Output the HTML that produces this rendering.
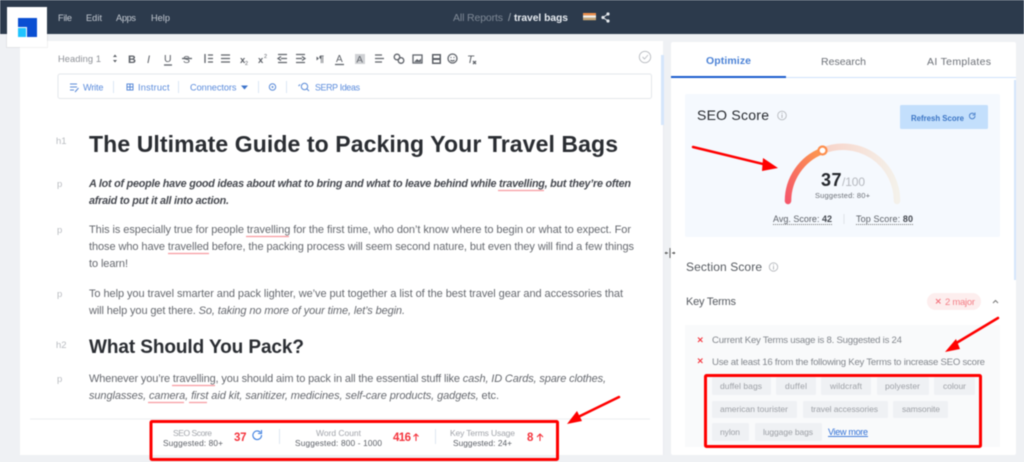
<!DOCTYPE html>
<html><head><meta charset="utf-8"><title>travel bags</title>
<style>
html,body{margin:0;padding:0;width:1024px;height:462px;overflow:hidden;background:#eff1f4}
svg{display:block;filter:blur(.4px)}
text{font-family:"Liberation Sans",sans-serif;white-space:pre}
.p{font-size:11px;fill:#66696f}
.bi{font-size:10.8px;fill:#45484f;font-weight:bold;font-style:italic}
.l{font-size:9.5px;fill:#b9bcc1}
.m{font-size:9.2px;fill:#c3c9d1}
.b{font-size:9.2px;fill:#5a8bdc}
.t{font-size:8.5px}
.k{font-size:9.6px;fill:#83878d}
.s{font-size:8.3px;fill:#5b5f66}
.g{font-size:8.5px;fill:#9da0a6}
.r{font-weight:bold;fill:#f4333c;font-size:11.5px}
.ic{fill:none;stroke:#60646b;stroke-width:1.3}
.ib{fill:none;stroke:#5b8bd8;stroke-width:1}
</style></head><body>
<svg width="1024" height="462" viewBox="0 0 1024 462" xmlns="http://www.w3.org/2000/svg">
<defs>
<linearGradient id="gr" x1="0" y1="1" x2="1" y2="0"><stop offset="0" stop-color="#f5586a"/><stop offset="1" stop-color="#fd9a4e"/></linearGradient>
<linearGradient id="gl" x1="0" y1="0" x2="1" y2="0"><stop offset="0" stop-color="#f8d3c8"/><stop offset="1" stop-color="#f4f1ea"/></linearGradient>
</defs>
<rect width="1024" height="462" fill="#eff1f4"/>
<!-- top bar -->
<rect width="1024" height="34" fill="#2c3a4c"/>
<!-- editor panel -->
<rect x="20" y="41" width="643" height="414" fill="#fff"/>
<rect x="661" y="55" width="3" height="70" fill="#d5e6fb"/>
<rect x="663" y="125" width="1" height="330" fill="#e9ebef"/>
<!-- logo -->
<rect x="6" y="8" width="42" height="40" fill="#000" opacity=".05"/>
<rect x="7" y="7" width="40" height="40" fill="#fff"/>
<path d="M18 18H37V37H27V27H18Z" fill="#0a4fd2"/>
<rect x="18" y="28" width="8" height="9" fill="#1fc4ff"/>
<!-- menu -->
<text class="m" x="58" y="21" textLength="14">File</text>
<text class="m" x="86" y="21" textLength="16">Edit</text>
<text class="m" x="116" y="21" textLength="20">Apps</text>
<text class="m" x="151" y="21" textLength="19">Help</text>
<text x="453" y="21" font-size="10.500" fill="#7f8996" textLength="50">All Reports</text>
<text x="508" y="21" font-size="11" fill="#9aa3ad">/</text>
<text x="514" y="21" font-size="10.300" font-weight="bold" fill="#e8ecf1" textLength="54">travel bags</text>
<rect x="583" y="13" width="13" height="2.400" fill="#f0904a"/><rect x="583" y="15.400" width="13" height="2.400" fill="#f4f1ec"/><rect x="583" y="17.800" width="13" height="2.400" fill="#c9a878"/>
<path d="M608 14L603 17.500L608 21" fill="none" stroke="#e4e8ec" stroke-width="1"/>
<circle cx="608" cy="14" r="1.600" fill="#e4e8ec"/><circle cx="603" cy="17.500" r="1.600" fill="#e4e8ec"/><circle cx="608" cy="21" r="1.600" fill="#e4e8ec"/>
<!-- toolbar 1 -->
<text x="58" y="62" font-size="9.300" fill="#8d9096" textLength="43">Heading 1</text>
<path d="M113 57l2-2.500 2 2.500zM113 60l2 2.500 2-2.500z" fill="#60646b"/>
<text x="128" y="63" font-size="11" font-weight="bold" fill="#5b5f66">B</text>
<text x="147" y="63" font-size="11" font-style="italic" fill="#5b5f66">I</text>
<text x="164" y="62" font-size="10.500" fill="#5b5f66">U</text><path d="M164 65h8" class="ic" stroke-width="1"/>
<text x="183" y="63" font-size="10.500" fill="#5b5f66">S</text><path d="M182 58.500h10" class="ic" stroke-width="1"/>
<path d="M205 54v9M208 55h5M208 58.500h5M208 62h5" class="ic"/>
<path d="M221 55h9M221 58.500h9M221 62h9" class="ic"/>
<text x="240" y="63" font-size="9.500" font-weight="bold" fill="#5b5f66">x</text><text x="245" y="65" font-size="5.500" fill="#5b5f66">2</text>
<text x="258" y="63" font-size="9.500" font-weight="bold" fill="#5b5f66">x</text><text x="264" y="58" font-size="5.500" fill="#5b5f66">2</text>
<path d="M278 54.500h9M281 58.500h6M278 62.500h9M281 56.500l-3 2 3 2" class="ic"/>
<path d="M296 54.500h9M296 58.500h6M296 62.500h9M302 56.500l3 2-3 2" class="ic"/>
<path d="M316.500 56.500l2.500 2-2.500 2z" fill="#60646b"/><text x="319" y="62" font-size="9" font-weight="bold" fill="#5b5f66">¶</text>
<text x="336" y="62" font-size="10" fill="#5b5f66">A</text><path d="M335 64.500h9" class="ic"/>
<rect x="355" y="54" width="10" height="10" fill="#cfd1d4"/><text x="356.500" y="62.500" font-size="9.500" fill="#5b5f66">A</text>
<path d="M375 55h7M375 58.500h9M375 62h7" class="ic"/>
<circle cx="397" cy="57" r="2.800" class="ic" stroke-width="1.500"/><circle cx="401" cy="60.500" r="2.800" class="ic" stroke-width="1.500"/>
<rect x="413" y="55" width="9" height="8" class="ic" stroke-width="1.400"/><path d="M414 62l3-3 2 1.500 2-2v3.500z" fill="#60646b"/>
<rect x="432" y="54" width="9" height="10" fill="#5b5f66"/><rect x="433.500" y="55.500" width="6" height="2.500" fill="#fff"/><rect x="433.500" y="60" width="6" height="2.500" fill="#fff"/>
<circle cx="452.500" cy="58.500" r="4.500" class="ic" stroke-width=".9"/><circle cx="451" cy="57.500" r=".6" fill="#60646b"/><circle cx="454" cy="57.500" r=".6" fill="#60646b"/><path d="M450.500 60c1 1.200 3 1.200 4 0" class="ic" stroke-width=".8"/>
<text x="467" y="63" font-size="11" font-style="italic" fill="#5b5f66">T</text><path d="M473 61l3 3M476 61l-3 3" class="ic"/>
<circle cx="645" cy="57" r="5.700" fill="none" stroke="#b9bcc1" stroke-width=".9"/><path d="M642.500 57l2 2 3.500-4" fill="none" stroke="#b9bcc1" stroke-width=".9"/>
<!-- toolbar 2 -->
<rect x="58" y="74" width="593.500" height="24.500" rx="2" fill="#fff" stroke="#e4e7eb"/>
<path d="M70 84h7M70 87h7M70 90h4" class="ib"/><path d="M75 92l3.500-4" class="ib" stroke-width="1.300"/>
<text class="b" x="83" y="90.500" textLength="20.500">Write</text>
<path d="M113.500 81v12M178.500 81v12M258.500 81v12M286.500 81v12" stroke="#dbe7f5"/>
<rect x="127" y="84" width="6" height="6" class="ib"/><path d="M130 84v6M127 87h6" class="ib" stroke-width=".8"/>
<text class="b" x="138" y="90.500" textLength="31.500">Instruct</text>
<text class="b" x="190" y="90.500" textLength="46.500">Connectors</text>
<path d="M241 85.500h7l-3.500 4z" fill="#3d74cb"/>
<circle cx="272.500" cy="87" r="3.200" class="ib" stroke-width="1.300"/><circle cx="272.500" cy="87" r="1" fill="#5b8bd8"/>
<circle cx="304.500" cy="86.500" r="3.200" class="ib" stroke-width="1.300"/><path d="M307 89l2 2M300 84.500l-1.500 1.500" class="ib" stroke-width="1.300"/>
<text class="b" x="315" y="90.500" style="font-size:8.800px" textLength="45">SERP Ideas</text>
<!-- doc -->
<text class="l" x="56" y="144">h1</text>
<text x="89" y="152" font-size="23" font-weight="bold" fill="#2a2d32" textLength="529">The Ultimate Guide to Packing Your Travel Bags</text>
<text class="l" x="57" y="187">p</text>
<text class="bi" x="89" y="187" textLength="542">A lot of people have good ideas about what to bring and what to leave behind while travelling, but they’re often</text>
<text class="bi" x="89" y="204" textLength="140">afraid to put it all into action.</text>
<path d="M498 190.500h46" stroke="#f79aa0" stroke-width="1.200"/>
<text class="l" x="57" y="233">p</text>
<text class="p" x="89" y="233" textLength="542">This is especially true for people travelling for the first time, who don’t know where to begin or what to expect. For</text>
<text class="p" x="89" y="250" textLength="545">those who have travelled before, the packing process will seem second nature, but even they will find a few things</text>
<text class="p" x="89" y="267" textLength="39">to learn!</text>
<path d="M246 236.500h43M168 253.500h41" stroke="#f79aa0" stroke-width="1.300"/>
<text class="l" x="57" y="297">p</text>
<text class="p" x="89" y="297" textLength="534">To help you travel smarter and pack lighter, we’ve put together a list of the best travel gear and accessories that</text>
<text class="p" x="89" y="314" textLength="316">will help you get there. <tspan font-style="italic">So, taking no more of your time, let’s begin.</tspan></text>
<text class="l" x="56" y="348">h2</text>
<text x="89" y="353" font-size="19" font-weight="bold" fill="#2a2d32" textLength="215">What Should You Pack?</text>
<text class="l" x="57" y="382">p</text>
<text class="p" x="89" y="382" textLength="517">Whenever you’re travelling, you should aim to pack in all the essential stuff like <tspan font-style="italic">cash, ID Cards, spare clothes,</tspan></text>
<text class="p" x="89" y="399" textLength="410"><tspan font-style="italic">sunglasses, camera, first aid kit, sanitizer, medicines, self-care products, gadgets,</tspan> etc.</text>
<path d="M172 385.500h43M148 402.500h36M189 402.500h18" stroke="#f79aa0" stroke-width="1.300"/>
<!-- bottom bar -->
<rect x="20" y="419" width="641" height="34" fill="#fff"/>
<path d="M30 419h620" stroke="#eceef1"/>
<text class="t" x="173" y="436" style="fill:#a1a4aa" textLength="39">SEO Score</text>
<text class="s" x="163" y="446" textLength="60">Suggested: 80+</text>
<text class="r" x="234" y="441" textLength="12.500">37</text>
<path d="M261.500 435a4.300 4.300 0 1 1-1-2.500" fill="none" stroke="#3d7fe0" stroke-width="1.100"/><path d="M261.500 430v3.500h-3.500" fill="none" stroke="#3d7fe0" stroke-width="1.100"/>
<path d="M279.500 429v15M435.500 429v15" stroke="#dfe7f1"/>
<text class="t" x="316" y="436" style="fill:#a1a4aa" textLength="45">Word Count</text>
<text class="s" x="295" y="446" textLength="87">Suggested: 800 - 1000</text>
<text class="r" x="393" y="441" textLength="18">416</text>
<path d="M416 441v-7M413.500 436.500l2.500-2.500 2.500 2.500" fill="none" stroke="#f4333c" stroke-width="1.100"/>
<text class="t" x="450" y="436" style="fill:#a1a4aa" textLength="65">Key Terms Usage</text>
<text class="s" x="453" y="446" textLength="59">Suggested: 24+</text>
<text class="r" x="527" y="441">8</text>
<path d="M540 441v-7M537 437l3-3 3 3" fill="none" stroke="#f4333c" stroke-width="1.100"/>
<rect x="151" y="421.500" width="406.500" height="38" fill="none" stroke="#f00" stroke-width="3" rx="1"/>
<!-- right panel -->
<rect x="671" y="42" width="345" height="413" rx="2" fill="#fff"/>
<text x="706" y="64" font-size="10.500" font-weight="bold" fill="#4b82d6" textLength="45">Optimize</text>
<text x="821" y="65" font-size="10.500" fill="#6b6f76" textLength="45">Research</text>
<text x="927" y="65" font-size="10.500" fill="#6b6f76" textLength="64">AI Templates</text>
<path d="M671 77.500h345" stroke="#cfe2fb"/>
<rect x="671" y="76" width="115" height="2" fill="#1a5dcd"/>
<rect x="1014" y="80" width="2" height="200" fill="#d5e6fb"/>
<!-- resize cursor -->
<path d="M670 248v10M665 253h3M672 253h3" stroke="#555" stroke-width=".9"/>
<path d="M666.500 251.500l-2 1.500 2 1.500zM673.500 251.500l2 1.500-2 1.500z" fill="#555"/>
<!-- seo card -->
<rect x="685" y="94" width="315" height="143" rx="2" fill="#f5f9fe"/>
<text x="697" y="120" font-size="14" fill="#26292e" textLength="72">SEO Score</text>
<circle cx="782" cy="115.500" r="4.300" fill="none" stroke="#b5b8bd" stroke-width=".9"/><path d="M782 114.500v3.500M782 112.800v1" stroke="#b5b8bd"/>
<rect x="900" y="105" width="88" height="24" rx="1.500" fill="#c3dffc"/>
<text x="911" y="121" font-size="7.800" fill="#3a74c4" font-weight="bold" textLength="53">Refresh Score</text>
<path d="M975 116a2.800 2.800 0 1 1-.8-2" fill="none" stroke="#3a74c4" stroke-width=".9"/><path d="M975 112.500v2.500h-2.500" fill="none" stroke="#3a74c4" stroke-width=".8"/>
<!-- gauge -->
<path d="M822 151A54 54 0 0 1 897 201" fill="none" stroke="url(#gl)" stroke-width="6.500" stroke-linecap="round"/>
<path d="M788 201A54 54 0 0 1 822 151" fill="none" stroke="url(#gr)" stroke-width="6.500" stroke-linecap="round"/>
<circle cx="822.500" cy="150.500" r="4" fill="#fff" stroke="#fd8f4e" stroke-width="2.200"/>
<text x="821" y="186" font-size="18" font-weight="bold" fill="#26292e" textLength="20.500">37</text>
<text x="842" y="186" font-size="12" fill="#b5b8be" textLength="23">/100</text>
<text x="815" y="198" font-size="7.500" fill="#6c7077" textLength="55">Suggested: 80+</text>
<text x="773" y="222" font-size="9" fill="#5b5f66" textLength="59">Avg. Score: <tspan font-weight="bold" fill="#44484f">42</tspan></text>
<text x="856" y="222" font-size="9" fill="#5b5f66" textLength="57">Top Score: <tspan font-weight="bold" fill="#44484f">80</tspan></text>
<path d="M773 224.500h59M856 224.500h57" stroke="#777" stroke-dasharray="1 1"/>
<path d="M844 214v10" stroke="#dfe3ea"/>
<!-- section score -->
<text x="686" y="271" font-size="12" fill="#55595f" textLength="76">Section Score</text>
<circle cx="773.500" cy="267" r="4.200" fill="none" stroke="#b5b8bd" stroke-width=".9"/><path d="M773.500 266v3.500M773.500 264.300v1" stroke="#b5b8bd"/>
<text x="686" y="305" font-size="11" fill="#55595f" textLength="50">Key Terms</text>
<rect x="927" y="293" width="54" height="17" rx="8.500" fill="#fdeeee"/>
<path d="M936 299l4.500 4.500M940.500 299l-4.500 4.500" stroke="#f4707a" stroke-width="1"/>
<text x="945" y="305" font-size="9.500" fill="#f47f87" textLength="30">2 major</text>
<path d="M993 303l2.500-2.500 2.500 2.500" fill="none" stroke="#777" stroke-width="1"/>
<rect x="685" y="325" width="315" height="122" fill="#f9fafb"/>
<path d="M698 337.500l4.500 4.500M702.500 337.500l-4.500 4.500M698 358.500l4.500 4.500M702.500 358.500l-4.500 4.500" stroke="#f4333c" stroke-width="1.100"/>
<text class="k" x="712" y="343" textLength="190">Current Key Terms usage is 8. Suggested is 24</text>
<text class="k" x="712" y="365" textLength="273">Use at least 16 from the following Key Terms to increase SEO score</text>
<g fill="#eff1f4">
<rect x="712" y="377" width="59" height="18" rx="1.500"/><rect x="776" y="377" width="40" height="18" rx="1.500"/><rect x="821" y="377" width="50" height="18" rx="1.500"/><rect x="877" y="377" width="52" height="18" rx="1.500"/><rect x="934" y="377" width="41" height="18" rx="1.500"/>
<rect x="712" y="401" width="85" height="17" rx="1.500"/><rect x="803" y="401" width="85" height="17" rx="1.500"/><rect x="893" y="401" width="55" height="17" rx="1.500"/>
<rect x="712" y="423" width="37" height="18" rx="1.500"/><rect x="755" y="423" width="67" height="18" rx="1.500"/>
</g>
<text class="g" x="720" y="389" textLength="42">duffel bags</text>
<text class="g" x="785" y="389" textLength="22">duffel</text>
<text class="g" x="830" y="389" textLength="32">wildcraft</text>
<text class="g" x="885" y="389" textLength="35">polyester</text>
<text class="g" x="943" y="389" textLength="23">colour</text>
<text class="g" x="720" y="412" textLength="68">american tourister</text>
<text class="g" x="811" y="412" textLength="67">travel accessories</text>
<text class="g" x="902" y="412" textLength="38">samsonite</text>
<text class="g" x="720" y="435" textLength="20">nylon</text>
<text class="g" x="763" y="435" textLength="50">luggage bags</text>
<text x="828" y="435" font-size="9" fill="#2f6fd6" text-decoration="underline" textLength="40">View more</text>
<rect x="705.500" y="375.500" width="275" height="71" fill="none" stroke="#f00" stroke-width="3" rx="1"/>
<!-- arrows -->
<path d="M693 147L765 164.500" stroke="#f00" stroke-width="2.500" stroke-linecap="round"/>
<path d="M778 168L763 158L762 171Z" fill="#f00"/>
<path d="M998 318L953 345" stroke="#f00" stroke-width="2.500" stroke-linecap="round"/>
<path d="M945 352L956 339L960 349Z" fill="#f00"/>
<path d="M619 397L574 419" stroke="#f00" stroke-width="2.500" stroke-linecap="round"/>
<path d="M567 424L577 411L582 421Z" fill="#f00"/>
</svg>
</body></html>
